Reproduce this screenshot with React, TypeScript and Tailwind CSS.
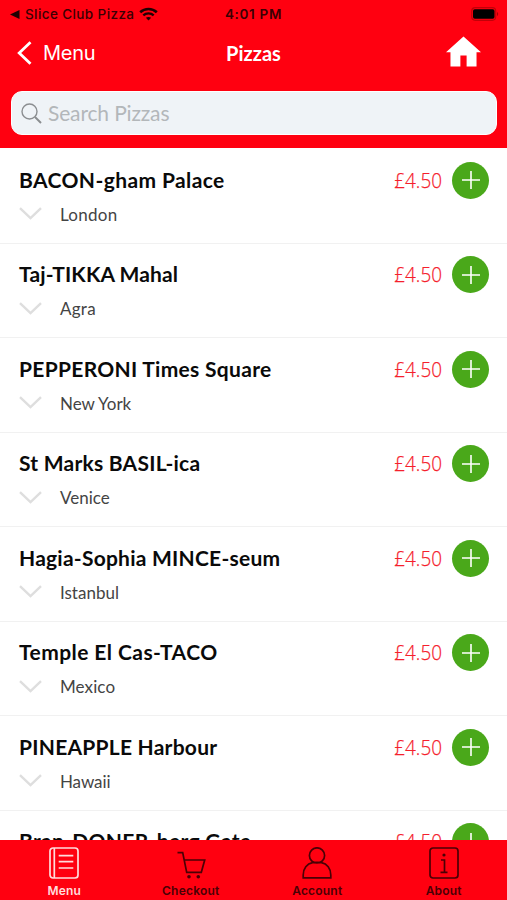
import type { ReactNode } from "react";

type Pizza = { name: string; place?: string; nameClass: string; placeClass?: string };

const pizzas: Pizza[] = [
  { name: "BACON-gham Palace", place: "London", nameClass: "tracking-[0.4px]", placeClass: "tracking-[0.25px]" },
  { name: "Taj-TIKKA Mahal", place: "Agra", nameClass: "tracking-[0.12px]", placeClass: "tracking-[0.25px]" },
  { name: "PEPPERONI Times Square", place: "New York", nameClass: "tracking-[0.3px]", placeClass: "tracking-[-0.05px]" },
  { name: "St Marks BASIL-ica", place: "Venice", nameClass: "tracking-[0.24px]", placeClass: "tracking-[0px]" },
  { name: "Hagia-Sophia MINCE-seum", place: "Istanbul", nameClass: "tracking-[0.24px]", placeClass: "tracking-[0px]" },
  { name: "Temple El Cas-TACO", place: "Mexico", nameClass: "tracking-[0.43px]", placeClass: "tracking-[0.1px]" },
  { name: "PINEAPPLE Harbour", place: "Hawaii", nameClass: "tracking-[0.24px]", placeClass: "tracking-[-0.1px]" },
  { name: "Bran-DONER-berg Gate", nameClass: "tracking-[0.32px]" },
];

function StatusBar() {
  return (
    <div className="grid h-7 grid-cols-3 items-center px-2 text-[13.5px] font-medium text-[#3a0003]">
      <div className="flex items-center pl-0.5 whitespace-nowrap">
        <svg width="10" height="9" viewBox="0 0 10 9" className="mr-[5px] shrink-0">
          <path d="M0 4.5 9.5 0v9z" fill="#200002" />
        </svg>
        <span className="tracking-[0.4px]">Slice Club Pizza</span>
        <svg width="19" height="14" viewBox="0 0 19 14" className="ml-[5px] shrink-0" fill="none" stroke="#200002">
          <path d="M1.2 5.2C5.8.9 13.2.9 17.8 5.2" strokeWidth="2.6" />
          <path d="M4.3 8.3c2.9-2.6 7.5-2.6 10.4 0" strokeWidth="2.4" />
          <path d="M9.5 13.5 6.9 10.8c1.5-1.2 3.7-1.2 5.2 0z" fill="#200002" stroke="none" />
        </svg>
      </div>
      <div className="text-center font-semibold tracking-[0.65px]">4:01 PM</div>
      <div className="flex justify-end">
        <svg width="28" height="14" viewBox="0 0 28 14">
          <rect x="0.7" y="0.7" width="24" height="12.6" rx="3.5" fill="none" stroke="#c20008" strokeWidth="1.2" />
          <rect x="2" y="2.3" width="21.5" height="9.4" rx="1.8" fill="#000" />
          <path d="M26 5c1.6.5 1.6 3.5 0 4z" fill="#a30006" />
        </svg>
      </div>
    </div>
  );
}

function NavBar() {
  return (
    <div className="grid h-[50px] grid-cols-3 items-center px-[17px] text-white">
      <div className="flex items-center">
        <svg width="15" height="24" viewBox="0 0 15 24" fill="none" stroke="currentColor" strokeWidth="2.8">
          <path d="M13.5 1.2 2.2 12l11.3 10.8" />
        </svg>
        <span className="ml-[11px] text-[20px] leading-6 tracking-[-0.3px]">Menu</span>
      </div>
      <h1 className="text-center font-[Lato,sans-serif] text-[20px] leading-6 font-bold">Pizzas</h1>
      <svg width="35" height="31" viewBox="0 0 36 31" className="mr-[9px] mb-[3px] justify-self-end" fill="currentColor">
        <path d="M18 0 0 16.2h4.6V31h10.2V19.6h6.4V31h10.2V16.2H36z" />
      </svg>
    </div>
  );
}

function PizzaRow({ pizza }: { pizza: Pizza }) {
  return (
    <li className="flex h-[94.5px] items-start border-b border-[#f1f1f1] pr-[18px] pl-[19px] font-[Lato,sans-serif]">
      <div className="flex-1">
        <h2 className={`mt-[17.5px] text-[21px] leading-[26px] font-bold whitespace-nowrap text-[#0a0a0a] ${pizza.nameClass}`}>
          {pizza.name}
        </h2>
        {pizza.place && (
          <div className="mt-2.5 flex h-[22px] items-center">
            <svg width="23" height="13" viewBox="0 0 23 13" fill="none" stroke="#dedede" strokeWidth="2.4">
              <path d="M1 1.2 11.5 11.2 22 1.2" />
            </svg>
            <span className={`mt-0.5 ml-[18px] text-[17px] leading-[22px] text-[#444] ${pizza.placeClass}`}>
              {pizza.place}
            </span>
          </div>
        )}
      </div>
      <div className="mt-[17.5px] mr-[10px] origin-right scale-x-90 font-['Open_Sans',sans-serif] text-[21px] leading-[26px] font-light text-[#f5202c] [-webkit-text-stroke:0.25px]">
        £4.50
      </div>
      <button className="mt-[12.5px] flex size-[37px] items-center justify-center rounded-full bg-[#4aa81a]">
        <svg width="18" height="18" viewBox="0 0 18 18" stroke="#fff" strokeWidth="1.6">
          <path d="M9 0v18M0 9h18" />
        </svg>
      </button>
    </li>
  );
}

function Tab({ label, active, children }: { label: string; active?: boolean; children: ReactNode }) {
  return (
    <button className={`flex flex-1 flex-col items-center pt-[7px] ${active ? "text-[#ffdcdc]" : "text-[#4a0005]"}`}>
      <svg width="32" height="32" viewBox="0 0 32 32" fill="none" stroke="currentColor" strokeWidth="1.7">
        {children}
      </svg>
      <span className="mt-1 text-[12px] leading-4 font-semibold tracking-[0.2px]">{label}</span>
    </button>
  );
}

export default function App() {
  return (
    <div className="flex h-[900px] w-[507px] flex-col overflow-hidden bg-white font-[Inter,sans-serif]">
      <header className="h-[147.5px] shrink-0 bg-[#ff0010]">
        <StatusBar />
        <NavBar />
        <div className="mt-[13px] mr-2.5 ml-[11px] flex h-11 items-center rounded-[11px] border border-white bg-[#eff3f7] pl-[9px]">
          <svg width="21" height="21" viewBox="0 0 21 21" fill="none" stroke="#8b8e91">
            <circle cx="8.5" cy="8.5" r="7.5" strokeWidth="1.4" />
            <path d="m14 14 6 6" strokeWidth="2" />
          </svg>
          <span className="ml-[6px] font-[Lato,sans-serif] text-[21px] leading-6 tracking-[-0.15px] text-[#b3b7ba]">
            Search Pizzas
          </span>
        </div>
      </header>

      <ul className="min-h-0 flex-1 overflow-hidden pt-[1.5px]">
        {pizzas.map((pizza) => (
          <PizzaRow key={pizza.name} pizza={pizza} />
        ))}
      </ul>

      <nav className="flex h-15 shrink-0 bg-[#ff0010] pl-px">
        <Tab label="Menu" active>
          <rect x="2" y="1" width="28" height="30" rx="3" />
          <path d="M6.3 1v30M10.7 8.7h14.6M10.7 14.7h14.6M10.7 21h14.6" />
        </Tab>
        <Tab label="Checkout">
          <path d="M2.5 5.7h5.2l4 19.6h14.6L29.7 13H9.5" />
          <circle cx="14" cy="29.7" r="1.8" fill="currentColor" stroke="none" />
          <circle cx="23.3" cy="29.7" r="1.8" fill="currentColor" stroke="none" />
        </Tab>
        <Tab label="Account">
          <circle cx="16" cy="8.4" r="7.6" />
          <path d="M11.5 15.7C6 16.8 2.2 21.5 2.2 28v2.8h27.6V28c0-6.5-3.8-11.2-9.3-12.3-3-.6-6-.6-9 0z" />
        </Tab>
        <Tab label="About">
          <rect x="2" y="1" width="28" height="30" rx="3" />
          <path d="M13 13h3.5v12M12.5 25.3h7" />
          <circle cx="16" cy="8" r="1.6" fill="currentColor" stroke="none" />
        </Tab>
      </nav>
    </div>
  );
}
